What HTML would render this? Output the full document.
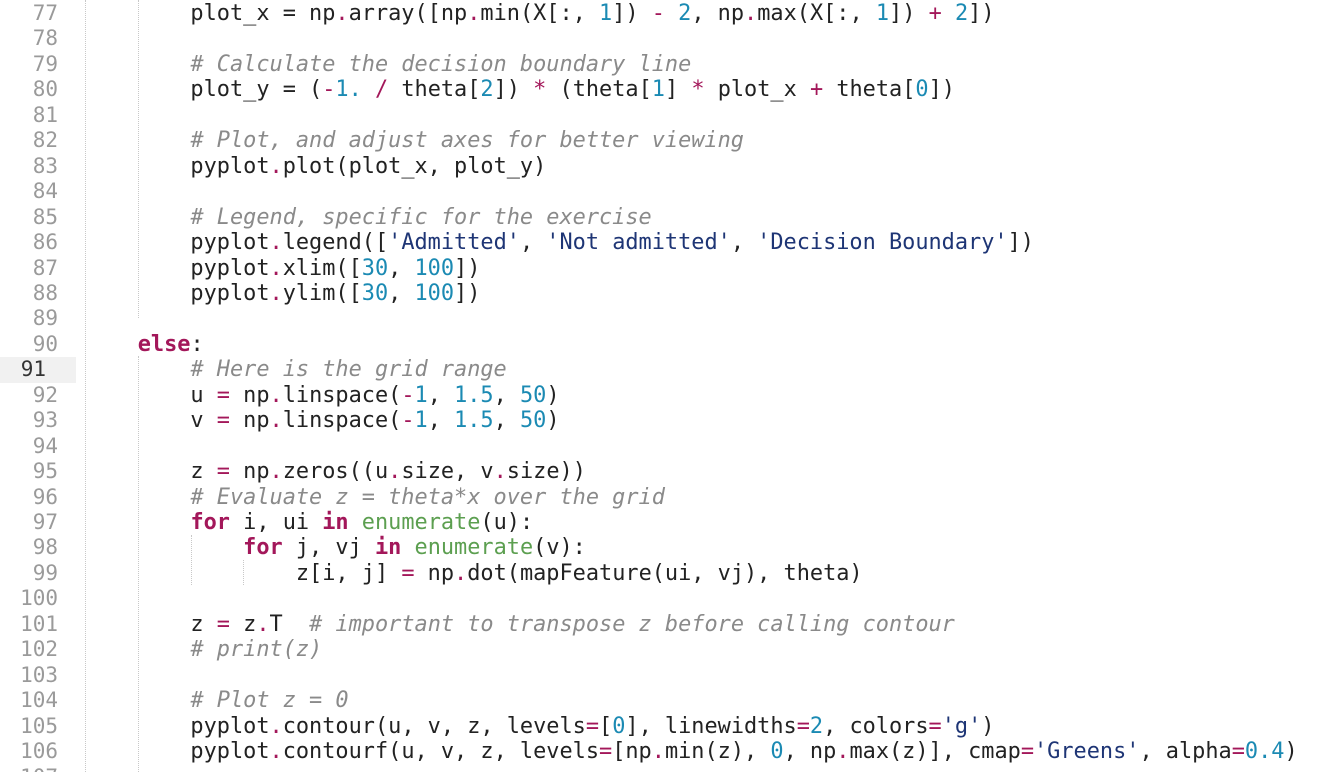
<!DOCTYPE html>
<html><head><meta charset="utf-8"><style>
html,body{margin:0;padding:0;background:#fff;width:1327px;height:772px;overflow:hidden}
body{position:relative;font-family:"DejaVu Sans Mono","Liberation Mono",monospace;font-size:21.9px;}
.ln{position:absolute;left:0;width:58px;text-align:right;color:#9a9a9a;font-family:"DejaVu Sans Mono",monospace;font-size:21px}
.hl{background:#f1f1f1;width:76px;text-align:left}
.code{position:absolute;left:85px;white-space:pre;color:#222}
.k{color:#a3175a;font-weight:bold}
.o{color:#a3175a}
.n{color:#1b8ab3}
.s{color:#1e3575}
.b{color:#5c9f50}
.c{color:#8a8a8a;font-style:italic}
.g{position:absolute;border-left:1px dotted #c8c8c8;width:0}
</style></head><body>
<div class="g" style="left:85px;top:0;height:772px"></div>
<div class="g" style="left:138px;top:0;height:318px"></div>
<div class="g" style="left:138px;top:356px;height:416px"></div>
<div class="g" style="left:191px;top:535px;height:50px"></div>
<div class="g" style="left:243px;top:560px;height:25px"></div>
<div id="c"></div>
<script>
const L=[
'        plot_x = np<span class="o">.</span>array([np<span class="o">.</span>min(X[:, <span class="n">1</span>]) <span class="o">-</span> <span class="n">2</span>, np<span class="o">.</span>max(X[:, <span class="n">1</span>]) <span class="o">+</span> <span class="n">2</span>])',
'',
'        <span class="c"># Calculate the decision boundary line</span>',
'        plot_y = (<span class="o">-</span><span class="n">1.</span> <span class="o">/</span> theta[<span class="n">2</span>]) <span class="o">*</span> (theta[<span class="n">1</span>] <span class="o">*</span> plot_x <span class="o">+</span> theta[<span class="n">0</span>])',
'',
'        <span class="c"># Plot, and adjust axes for better viewing</span>',
'        pyplot<span class="o">.</span>plot(plot_x, plot_y)',
'',
'        <span class="c"># Legend, specific for the exercise</span>',
'        pyplot<span class="o">.</span>legend([<span class="s">\'Admitted\'</span>, <span class="s">\'Not admitted\'</span>, <span class="s">\'Decision Boundary\'</span>])',
'        pyplot<span class="o">.</span>xlim([<span class="n">30</span>, <span class="n">100</span>])',
'        pyplot<span class="o">.</span>ylim([<span class="n">30</span>, <span class="n">100</span>])',
'',
'    <span class="k">else</span>:',
'        <span class="c"># Here is the grid range</span>',
'        u <span class="o">=</span> np<span class="o">.</span>linspace(<span class="o">-</span><span class="n">1</span>, <span class="n">1.5</span>, <span class="n">50</span>)',
'        v <span class="o">=</span> np<span class="o">.</span>linspace(<span class="o">-</span><span class="n">1</span>, <span class="n">1.5</span>, <span class="n">50</span>)',
'',
'        z <span class="o">=</span> np<span class="o">.</span>zeros((u<span class="o">.</span>size, v<span class="o">.</span>size))',
'        <span class="c"># Evaluate z = theta*x over the grid</span>',
'        <span class="k">for</span> i, ui <span class="k">in</span> <span class="b">enumerate</span>(u):',
'            <span class="k">for</span> j, vj <span class="k">in</span> <span class="b">enumerate</span>(v):',
'                z[i, j] <span class="o">=</span> np<span class="o">.</span>dot(mapFeature(ui, vj), theta)',
'',
'        z <span class="o">=</span> z<span class="o">.</span>T  <span class="c"># important to transpose z before calling contour</span>',
'        <span class="c"># print(z)</span>',
'',
'        <span class="c"># Plot z = 0</span>',
'        pyplot<span class="o">.</span>contour(u, v, z, levels<span class="o">=</span>[<span class="n">0</span>], linewidths<span class="o">=</span><span class="n">2</span>, colors<span class="o">=</span><span class="s">\'g\'</span>)',
'        pyplot<span class="o">.</span>contourf(u, v, z, levels<span class="o">=</span>[np<span class="o">.</span>min(z), <span class="n">0</span>, np<span class="o">.</span>max(z)], cmap<span class="o">=</span><span class="s">\'Greens\'</span>, alpha<span class="o">=</span><span class="n">0.4</span>)',
''
];
let h='';const lh=25.45;
L.forEach((t,i)=>{const top=(i*lh+1).toFixed(2);const n=77+i;
h+=`<div class="ln${n==91?' hl':''}" style="top:${top}px;height:${lh}px;line-height:${lh}px">${n==91?'<span style="display:inline-block;width:46px;text-align:right;color:#333">'+n+'</span>':n}</div>`;
h+=`<div class="code" style="top:${top}px;line-height:${lh}px">${t}</div>`;});
document.getElementById('c').innerHTML=h;
</script>
</body></html>
